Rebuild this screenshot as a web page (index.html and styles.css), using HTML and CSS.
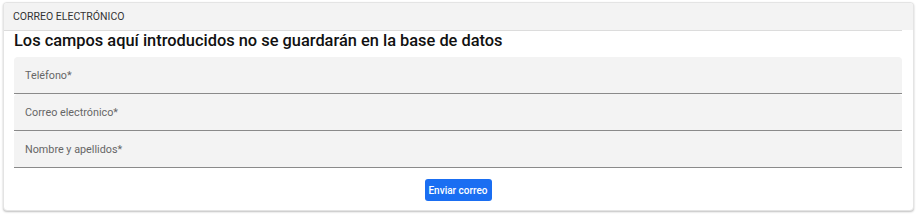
FILE: index.html
```html
<!DOCTYPE html>
<html lang="es">
<head>
    <meta charset="UTF-8">
    <meta name="viewport" content="width=device-width, initial-scale=1.0">
    <title>Correo electrónico</title>
    <link rel="stylesheet" href="styles.css">
</head>
<body>
    <div class="card">
        <div class="card-header">
            <span>Correo electrónico</span>
        </div>

        <div class="card-body">
            <h2>Los campos aquí introducidos no se guardarán en la base de datos</h2>

            <form id="mailForm">
                <div class="field">
                    <label for="phone">Teléfono*</label>
                </div>
                <div class="field">
                    <label for="email">Correo electrónico*</label>
                </div>
                <div class="field">
                    <label for="name">Nombre y apellidos*</label>
                </div>

                <div class="actions">
                    <button type="submit" class="send-btn">Enviar correo</button>
                </div>
            </form>
        </div>
    </div>
</body>
</html>
```

FILE: styles.css
```css
* {
    margin: 0;
    padding: 0;
    box-sizing: border-box;
}

body {
    font-family: Roboto, "Liberation Sans", Arial, sans-serif;
    background: #fff;
    padding: 2px 5px 5px 3px;
}

.card {
    background: #fff;
    border: 1px solid #e4e4e4;
    border-radius: 4px;
    box-shadow: 0 1px 2px rgba(0,0,0,0.25);
    overflow: hidden;
}

.card-header {
    position: relative;
    height: 27px;
    padding-left: 9px;
    background: #f3f3f3;
    display: flex;
    align-items: center;
    font-size: 10.5px;
    text-transform: uppercase;
    color: #333;
}

.card-header::after {
    content: "";
    position: absolute;
    left: 0;
    right: 11px;
    bottom: -1px;
    height: 1px;
    background: #dcdcdc;
}

.card-body {
    padding: 1px 11px 9px 10px;
}

h2 {
    font-size: 16.4px;
    font-weight: 500;
    color: #111;
    height: 26px;
    line-height: 20px;
}

.field {
    height: 37px;
    background: #f3f3f3;
    border-bottom: 1px solid #8a8a8a;
    border-radius: 4px 4px 0 0;
    display: flex;
    align-items: center;
    padding-left: 11px;
}

label {
    font-size: 10.8px;
    color: #666;
}

.actions {
    display: flex;
    justify-content: center;
    margin-top: 11px;
}

.send-btn {
    height: 22px;
    width: 67px;
    background: #1a6ef2;
    color: #fff;
    border: none;
    border-radius: 3px;
    font-family: Roboto, "Liberation Sans", Arial, sans-serif;
    font-size: 10px;
    font-weight: 500;
    cursor: pointer;
}
```
